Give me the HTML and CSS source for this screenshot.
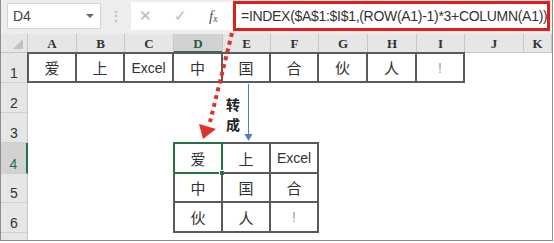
FILE: index.html
```html
<!DOCTYPE html>
<html lang="zh">
<head>
    <meta charset="UTF-8">
    <title>INDEX 转成</title>
    <link rel="stylesheet" href="styles.css">
</head>
<body>
    <div class="frame">
        <div class="fbar">
            <div class="namebox">D4<span class="caret"></span></div>
            <div class="grip">⋮</div>
            <div class="btns">
                <span class="btn">✕</span>
                <span class="btn">✓</span>
                <span class="fx">f<sub>x</sub></span>
            </div>
            <div class="formula">=INDEX($A$1:$I$1,(ROW(A1)-1)*3+COLUMN(A1))</div>
        </div>
        <div class="sheet">
            <!-- header row -->
            <div class="corner"><span class="tri"></span></div>
            <div class="ch">A</div>
            <div class="ch">B</div>
            <div class="ch">C</div>
            <div class="ch sel">D</div>
            <div class="ch">E</div>
            <div class="ch">F</div>
            <div class="ch">G</div>
            <div class="ch">H</div>
            <div class="ch">I</div>
            <div class="ch">J</div>
            <div class="ch">K</div>
            <!-- row 1 -->
            <div class="rh">1</div>
            <div class="c b bl bt">爱</div>
            <div class="c b bt">上</div>
            <div class="c b bt lat">Excel</div>
            <div class="c b bt">中</div>
            <div class="c b bt">国</div>
            <div class="c b bt">合</div>
            <div class="c b bt">伙</div>
            <div class="c b bt">人</div>
            <div class="c b bt lat light">!</div>
            <div class="c"></div>
            <div class="c"></div>
            <!-- row 2 -->
            <div class="rh">2</div>
            <div class="c"></div><div class="c"></div><div class="c"></div><div class="c"></div><div class="c"></div>
            <div class="c"></div><div class="c"></div><div class="c"></div><div class="c"></div><div class="c"></div><div class="c"></div>
            <!-- row 3 -->
            <div class="rh">3</div>
            <div class="c"></div><div class="c"></div><div class="c"></div><div class="c"></div><div class="c"></div>
            <div class="c"></div><div class="c"></div><div class="c"></div><div class="c"></div><div class="c"></div><div class="c"></div>
            <!-- row 4 -->
            <div class="rh sel">4</div>
            <div class="c"></div><div class="c"></div><div class="c"></div>
            <div class="c b bl bt active">爱<span class="handle"></span></div>
            <div class="c b bt">上</div>
            <div class="c b bt lat">Excel</div>
            <div class="c"></div><div class="c"></div><div class="c"></div><div class="c"></div><div class="c"></div>
            <!-- row 5 -->
            <div class="rh">5</div>
            <div class="c"></div><div class="c"></div><div class="c"></div>
            <div class="c b bl">中</div>
            <div class="c b">国</div>
            <div class="c b">合</div>
            <div class="c"></div><div class="c"></div><div class="c"></div><div class="c"></div><div class="c"></div>
            <!-- row 6 -->
            <div class="rh">6</div>
            <div class="c"></div><div class="c"></div><div class="c"></div>
            <div class="c b bl">伙</div>
            <div class="c b">人</div>
            <div class="c b lat light">!</div>
            <div class="c"></div><div class="c"></div><div class="c"></div><div class="c"></div><div class="c"></div>
            <!-- row 7 (cut) -->
            <div class="rh"></div>
        </div>
        <div class="note">转<br>成</div>
        <svg class="arrows" width="554" height="243" viewBox="0 0 554 243">
            <line x1="231" y1="33" x2="209" y2="122" stroke="#e0302a" stroke-width="4" stroke-dasharray="4 4"/>
            <polygon points="198,124 215,129 202,139" fill="#e0302a"/>
            <line x1="247.5" y1="84" x2="247.5" y2="136" stroke="#4f7fb8" stroke-width="1"/>
            <polygon points="243.5,134 251.5,134 247.5,141" fill="#4f7fb8"/>
        </svg>
    </div>
</body>
</html>
```
FILE: styles.css
```css
* {
    margin: 0;
    padding: 0;
    box-sizing: border-box;
}
body {
    background: #fff;
    font-family: "Liberation Sans", Arial, sans-serif;
}
.frame {
    position: relative;
    width: 553px;
    height: 241px;
    border: 1px solid #8e8e8e;
    border-top: none;
    overflow: hidden;
    background: #fff;
}
.fbar {
    height: 34px;
    background: #ededed;
    display: flex;
    align-items: center;
    padding: 2px 2px 4px 6px;
}
.namebox {
    width: 94px;
    height: 26px;
    background: #fff;
    border: 1px solid #d4d4d4;
    display: flex;
    align-items: center;
    justify-content: space-between;
    padding: 0 6px 0 5px;
    font-size: 14px;
    color: #444;
}
.caret {
    width: 0;
    height: 0;
    border-left: 4px solid transparent;
    border-right: 4px solid transparent;
    border-top: 4px solid #666;
}
.grip {
    width: 30px;
    text-align: center;
    color: #b0b0b0;
    font-size: 14px;
}
.btns {
    width: 102px;
    height: 28px;
    background: #fff;
    display: flex;
    align-items: center;
    padding-left: 8px;
    gap: 22px;
}
.btn {
    color: #b8b8b8;
    font-size: 15px;
}
.fx {
    font-family: "Liberation Serif", serif;
    font-style: italic;
    font-size: 15px;
    color: #555;
}
.fx sub {
    font-size: 10px;
    vertical-align: -1px;
}
.formula {
    flex: 1;
    height: 30px;
    border: 3px solid #e31b1b;
    background: #fff;
    display: flex;
    align-items: center;
    padding-left: 5px;
    font-family: "Liberation Sans", sans-serif;
    font-size: 14px;
    letter-spacing: -0.3px;
    color: #333;
    white-space: nowrap;
    overflow: hidden;
}
.sheet {
    display: grid;
    grid-template-columns: 27px 49px 48px 49px 49px 48px 48px 49px 49px 48px 59px 1fr;
    grid-template-rows: 19px 30px 30px 30px 31px 29px 30px 10px;
}
.corner {
    background: #e6e6e6;
    border-right: 1px solid #c6c6c6;
    border-bottom: 1px solid #c6c6c6;
    position: relative;
}
.tri {
    position: absolute;
    right: 4px;
    bottom: 3px;
    width: 0;
    height: 0;
    border-left: 10px solid transparent;
    border-bottom: 10px solid #c2c2c2;
}
.ch {
    background: #e6e6e6;
    border-right: 1px solid #c6c6c6;
    border-bottom: 1px solid #c6c6c6;
    text-align: center;
    font-family: "Liberation Serif", serif;
    font-weight: bold;
    font-size: 13px;
    line-height: 19px;
    color: #333;
}
.ch.sel {
    background: #d2d2d2;
    border-bottom: 2px solid #217346;
    color: #2a5a3e;
}
.rh {
    background: #e6e6e6;
    border-right: 1px solid #c6c6c6;
    border-bottom: 1px solid #d0d0d0;
    display: flex;
    align-items: flex-end;
    justify-content: center;
    padding-bottom: 1px;
    font-size: 14px;
    color: #333;
}
.rh.sel {
    background: #d2d2d2;
    border-right: 2px solid #217346;
    color: #217346;
}
.c {
    display: flex;
    align-items: center;
    justify-content: center;
    font-family: "Noto Sans CJK SC", sans-serif;
    font-size: 15px;
    color: #333;
    position: relative;
}
.c.lat {
    font-family: "Liberation Sans", sans-serif;
    font-size: 14px;
}
.c.light {
    color: #a0a0a0;
}
.b {
    border-right: 2px solid #5a5a5a;
    border-bottom: 2px solid #5a5a5a;
}
.bl {
    border-left: 2px solid #5a5a5a;
    margin-left: -1px;
}
.bt {
    border-top: 2px solid #5a5a5a;
    margin-top: -1px;
}
.active {
    border: 2px solid #217346;
}
.handle {
    position: absolute;
    right: -4px;
    bottom: -4px;
    width: 6px;
    height: 6px;
    background: #217346;
    border: 1px solid #fff;
}
.note {
    position: absolute;
    left: 225px;
    top: 94px;
    font-family: "Noto Sans CJK SC", sans-serif;
    font-weight: bold;
    font-size: 14px;
    line-height: 20px;
    color: #222;
}
.arrows {
    position: absolute;
    left: 0;
    top: 0;
    pointer-events: none;
}
```
